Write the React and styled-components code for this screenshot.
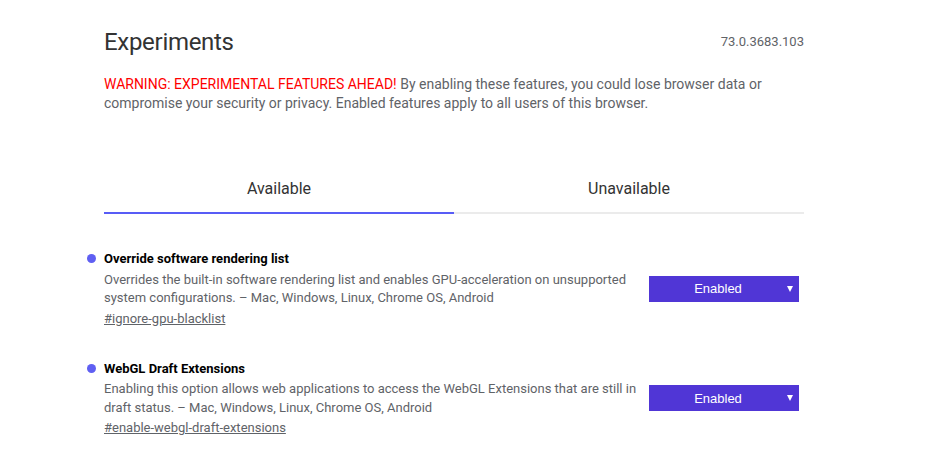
import React from "react";
import styled, { createGlobalStyle } from "styled-components";

const Global = createGlobalStyle`
  html, body { margin: 0; padding: 0; background: #fff; }
  body { font-family: Roboto, "Noto Sans", Arial, sans-serif; }
`;

const Page = styled.div`
  width: 700px;
  margin: 0 0 0 104px;
  padding-top: 28px;
`;

const Header = styled.header`
  display: flex;
  justify-content: space-between;
  align-items: flex-start;
`;

const Title = styled.h1`
  margin: 0;
  font-size: 24px;
  line-height: 28px;
  font-weight: 400;
  letter-spacing: -0.3px;
  color: #333;
`;

const Version = styled.span`
  margin-top: 6px;
  font-size: 13px;
  line-height: 16px;
  color: #5f6368;
`;

const Blurb = styled.p`
  margin: 19px 0 0;
  font-size: 14px;
  line-height: 19px;
  color: #5f6368;
`;

const Warning = styled.span`
  color: #ff0000;
`;

const Tabs = styled.nav`
  display: flex;
  margin-top: 51px;
`;

const Tab = styled.div`
  flex: 1;
  text-align: center;
  padding: 15px 0 13px;
  font-size: 16px;
  line-height: 20px;
  color: #333;
  border-bottom: 2px solid ${(p) => (p.$active ? "#585cf6" : "#ebebeb")};
`;

const List = styled.div`
  display: flex;
  flex-direction: column;
  gap: 30.5px;
  margin-top: 35.4px;
`;

const Row = styled.div`
  display: flex;
  align-items: center;
`;

const Info = styled.div`
  flex: 1;
  min-width: 0;
`;

const Name = styled.h2`
  position: relative;
  margin: 0;
  font-size: 13px;
  line-height: 19px;
  font-weight: 700;
  color: #000;

  &::before {
    content: "";
    position: absolute;
    left: -17px;
    top: 5px;
    width: 9px;
    height: 9px;
    border-radius: 50%;
    background: #5f5ff2;
  }
`;

const Desc = styled.p`
  margin: 2.5px 0 0;
  font-size: 13px;
  line-height: 18.5px;
  color: #5f6368;
`;

const Link = styled.a`
  display: inline-block;
  margin-top: 1px;
  font-size: 13px;
  line-height: 18.5px;
  color: #5f6368;
  text-decoration: underline;
`;

const Select = styled.div`
  display: flex;
  align-items: center;
  width: 150px;
  height: 26px;
  margin-right: 5px;
  background: #5036d6;
  color: #fff;
  font-family: "Liberation Sans", Arial, sans-serif;
  font-size: 13px;
`;

const SelectLabel = styled.span`
  flex: 1;
  text-align: center;
`;

const Arrow = styled.span`
  width: 0;
  height: 0;
  margin-right: 6px;
  border-left: 3.5px solid transparent;
  border-right: 3.5px solid transparent;
  border-top: 6px solid #fff;
`;

const experiments = [
  {
    name: "Override software rendering list",
    desc:
      "Overrides the built-in software rendering list and enables GPU-acceleration on unsupported system configurations. – Mac, Windows, Linux, Chrome OS, Android",
    link: "#ignore-gpu-blacklist",
  },
  {
    name: "WebGL Draft Extensions",
    desc:
      "Enabling this option allows web applications to access the WebGL Extensions that are still in draft status. – Mac, Windows, Linux, Chrome OS, Android",
    link: "#enable-webgl-draft-extensions",
  },
];

export default function App() {
  return (
    <>
      <Global />
      <Page>
        <Header>
          <Title>Experiments</Title>
          <Version>73.0.3683.103</Version>
        </Header>
        <Blurb>
          <Warning>WARNING: EXPERIMENTAL FEATURES AHEAD!</Warning> By enabling
          these features, you could lose browser data or compromise your
          security or privacy. Enabled features apply to all users of this
          browser.
        </Blurb>
        <Tabs>
          <Tab $active>Available</Tab>
          <Tab>Unavailable</Tab>
        </Tabs>
        <List>
          {experiments.map((e) => (
            <Row key={e.link}>
              <Info>
                <Name>{e.name}</Name>
                <Desc>{e.desc}</Desc>
                <Link href={e.link}>{e.link}</Link>
              </Info>
              <Select>
                <SelectLabel>Enabled</SelectLabel>
                <Arrow />
              </Select>
            </Row>
          ))}
        </List>
      </Page>
    </>
  );
}
